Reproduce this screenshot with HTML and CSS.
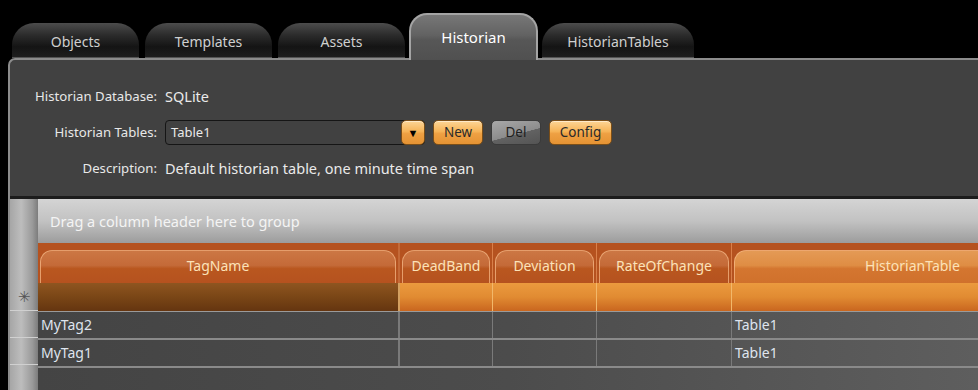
FILE: index.html
```html
<!DOCTYPE html>
<html lang="en">
<head>
    <meta charset="UTF-8">
    <title>Historian</title>
    <link rel="stylesheet" href="styles.css">
</head>
<body>

    <div class="tabbar">
        <div class="tab">Objects</div>
        <div class="tab">Templates</div>
        <div class="tab">Assets</div>
        <div class="tab selected">Historian</div>
        <div class="tab wide">HistorianTables</div>
    </div>

    <div class="panel">
        <div class="form">
            <div class="label">Historian Database:</div>
            <div class="value">SQLite</div>

            <div class="label">Historian Tables:</div>
            <div class="value controls">
                <div class="combo">
                    <span>Table1</span>
                    <button class="btn arrow">&#9660;</button>
                </div>
                <button class="btn new">New</button>
                <button class="btn del">Del</button>
                <button class="btn config">Config</button>
            </div>

            <div class="label">Description:</div>
            <div class="value">Default historian table, one minute time span</div>
        </div>

        <div class="grid">
            <div class="indicator">
                <div class="ind-top"></div>
                <div class="ind-cell star">&#10035;</div>
                <div class="ind-cell"></div>
                <div class="ind-cell"></div>
            </div>
            <div class="main">
                <div class="group-panel">Drag a column header here to group</div>
                <div class="row header">
                    <div class="cell c1"><div class="head">TagName</div></div>
                    <div class="cell c2"><div class="head">DeadBand</div></div>
                    <div class="cell c3"><div class="head">Deviation</div></div>
                    <div class="cell c4"><div class="head">RateOfChange</div></div>
                    <div class="cell c5"><div class="head sorted">HistorianTable</div></div>
                </div>
                <div class="row insert">
                    <div class="cell c1"></div>
                    <div class="cell c2"></div>
                    <div class="cell c3"></div>
                    <div class="cell c4"></div>
                    <div class="cell c5"></div>
                </div>
                <div class="row data">
                    <div class="cell c1">MyTag2</div>
                    <div class="cell c2"></div>
                    <div class="cell c3"></div>
                    <div class="cell c4"></div>
                    <div class="cell c5">Table1</div>
                </div>
                <div class="row data">
                    <div class="cell c1">MyTag1</div>
                    <div class="cell c2"></div>
                    <div class="cell c3"></div>
                    <div class="cell c4"></div>
                    <div class="cell c5">Table1</div>
                </div>
                <div class="filler"></div>
            </div>
        </div>
    </div>

</body>
</html>
```

FILE: styles.css
```css
body {
    margin: 0;
    background: #000;
    font-family: 'Noto Sans', 'Open Sans', sans-serif;
    font-size: 13px;
    color: #e6e6e6;
    height: 390px;
    overflow: hidden;
}

/* tabs along the top */
.tabbar {
    height: 58px;
    display: flex;
    align-items: flex-end;
    gap: 6px;
    padding-left: 12px;
}
.tab {
    width: 127px;
    height: 35px;
    box-sizing: border-box;
    padding-top: 9px;
    text-align: center;
    font-size: 14px;
    color: #cfcfcf;
    border-radius: 22px 22px 0 0;
    background: linear-gradient(#4c4c4c, #2c2c2c 35%, #141414 70%, #1e1e1e);
    border-bottom: 1px solid #555;
}
.tab.wide {
    width: 152px;
    margin-left: -2px;
}
.tab.selected {
    width: 129px;
    height: 47px;
    margin-bottom: -2px;
    margin-left: -2px;
    padding-top: 12px;
    position: relative;
    z-index: 1;
    font-size: 15px;
    color: #fff;
    border: 2px solid #a4a4a4;
    border-bottom: none;
    border-radius: 18px 18px 0 0;
    background: linear-gradient(#777, #626262 45%, #575757 55%, #505050);
}

/* main panel */
.panel {
    margin-left: 8px;
    height: 332px;
    border: 2px solid #8c8c8c;
    border-right: none;
    border-bottom: none;
    border-radius: 7px 0 0 0;
    background: #414141;
    display: flex;
    flex-direction: column;
    overflow: hidden;
}
.form {
    display: grid;
    grid-template-columns: 147px auto;
    column-gap: 8px;
    grid-auto-rows: 36px;
    align-items: center;
    padding: 18px 0 8px 0;
    height: 110px;
    border-bottom: 3px solid #1c1c1c;
}
.label {
    text-align: right;
    color: #e8e8e8;
    font-size: 13.2px;
}
.value {
    font-size: 14.5px;
    color: #eaeaea;
}
.controls {
    display: flex;
    align-items: center;
    gap: 8px;
}
.combo {
    width: 260px;
    height: 25px;
    border: 1px solid #151515;
    border-radius: 4px;
    display: flex;
    align-items: center;
    justify-content: space-between;
    padding-left: 5px;
    box-sizing: border-box;
    font-size: 13px;
}
.btn {
    height: 25px;
    padding: 0;
    font-family: 'Noto Sans', sans-serif;
    font-size: 13.5px;
    color: #2a2a2a;
    border: 1px solid #7a4e18;
    border-radius: 5px;
    background: linear-gradient(#fdd596, #f6b458 45%, #eea043 55%, #e59333);
    box-shadow: inset 0 1px 0 rgba(255, 255, 255, 0.5);
}
.btn.arrow {
    width: 24px;
    margin-right: -1px;
    font-size: 11px;
    color: #000;
}
.btn.new {
    width: 50px;
}
.btn.config {
    width: 63px;
}
.btn.del {
    width: 50px;
    color: #1e1e1e;
    border-color: #3a3a3a;
    background: linear-gradient(165deg, #a8a8a8, #8c8c8c 55%, #626262 56%, #545454);
    box-shadow: none;
}

/* data grid */
.grid {
    flex: 1;
    display: flex;
}
.indicator {
    width: 28px;
    background: linear-gradient(to right, #a6a6a6, #bdbdbd 40%, #9a9a9a 80%, #7c7c7c);
    display: flex;
    flex-direction: column;
}
.ind-top {
    height: 84px;
}
.ind-cell {
    height: 26px;
    border-bottom: 1px solid #d0d0d0;
    text-align: center;
    line-height: 26px;
    font-size: 15px;
    color: #555;
}
.ind-cell.star {
    height: 27px;
}
.main {
    flex: 1;
    display: flex;
    flex-direction: column;
    overflow: hidden;
}
.group-panel {
    height: 44px;
    box-sizing: border-box;
    padding: 12px 0 0 12px;
    font-size: 14.5px;
    color: #f4f4f4;
    background: linear-gradient(#d4d4d4, #c2c2c2 50%, #9c9c9c);
}
.row {
    display: flex;
    flex-shrink: 0;
}
.cell {
    box-sizing: border-box;
    flex-shrink: 0;
}
.c1 { width: 362px; }
.c2 { width: 93px; }
.c3 { width: 104px; }
.c4 { width: 135px; }
.c5 { width: 362px; }

.header {
    height: 40px;
    background: #b5521f;
}
.header .cell {
    padding: 7px 2px 0 2px;
    border-right: 1px solid #d9804a;
}
.header .c1 {
    border-right: 2px solid #c46a38;
}
.head {
    height: 33px;
    box-sizing: border-box;
    padding-top: 5px;
    text-align: center;
    font-size: 14px;
    color: #fce2b8;
    border: 1px solid rgba(250, 190, 140, 0.7);
    border-bottom: none;
    border-radius: 12px 12px 0 0;
    background: linear-gradient(#cc7744, #c46a38 45%, #b9571f 55%, #b5521f);
}
.head.sorted {
    background: linear-gradient(#e49a55, #df8d44 45%, #d47630 55%, #d0712c);
}

.insert {
    height: 28px;
    border-bottom: 1px solid #9a9a9a;
}
.insert .cell {
    background: linear-gradient(#eb9a3e, #e18b32 50%, #c9661f);
    border-right: 1px solid #f2b86a;
}
.insert .c1 {
    background: linear-gradient(#8e5520, #7a4616 50%, #653510);
    border-right: 2px solid #d4a060;
}

.data {
    height: 26px;
    border-bottom: 2px solid #8a8a8a;
    background: linear-gradient(to right, #444, #4c4c4c 50%, #5e5e5e);
}
.data .cell {
    padding-left: 3px;
    line-height: 25px;
    font-size: 14px;
    color: #dfe4ee;
    border-right: 1px solid #7a7a7a;
}
.data .c1 {
    border-right: 2px solid #7a7a7a;
}
.filler {
    flex: 1;
    background: linear-gradient(to right, #444, #4c4c4c 50%, #5e5e5e);
}
```
